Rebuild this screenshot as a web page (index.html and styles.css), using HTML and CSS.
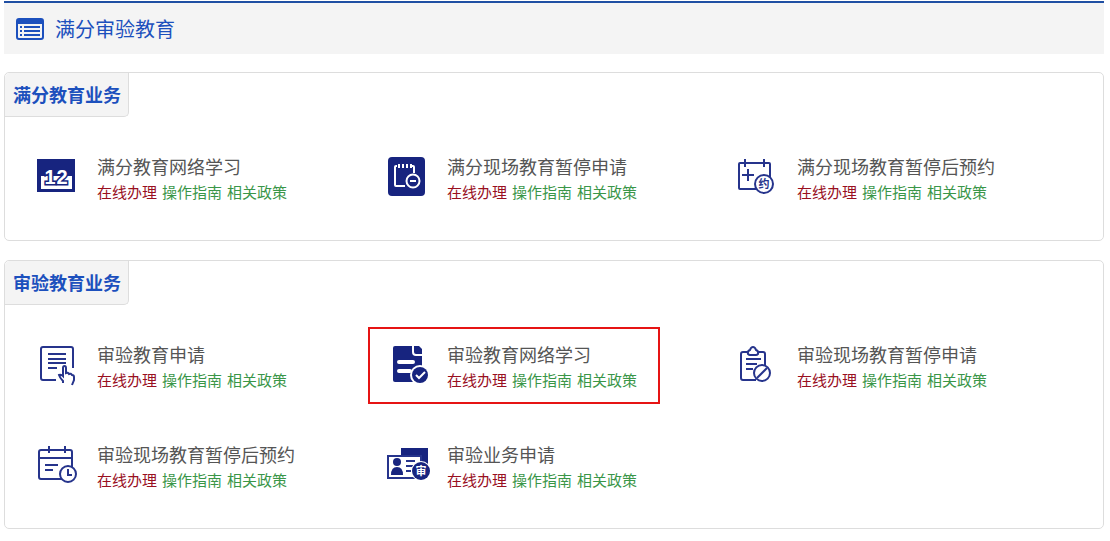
FILE: index.html
```html
<!DOCTYPE html>
<html lang="zh-CN">
<head>
    <meta charset="UTF-8">
    <meta name="viewport" content="width=device-width, initial-scale=1.0">
    <title>满分审验教育</title>
    <link rel="stylesheet" href="styles.css">
</head>
<body>
    <header class="page-header">
        <svg class="header-icon" viewBox="0 0 28 22" aria-hidden="true">
            <rect x="1" y="1" width="26" height="20" rx="2" fill="none" stroke="#1c50bd" stroke-width="2"/>
            <path d="M1 1h26v5H1z" fill="#1c50bd"/>
            <path d="M4 9h2M4 13h2M4 17h2M8 9h16M8 13h16M8 17h16" stroke="#1c50bd" stroke-width="2"/>
        </svg>
        <h1>满分审验教育</h1>
    </header>

    <section class="panel">
        <h2 class="panel-tab">满分教育业务</h2>
        <ul class="service-list">
            <li class="service">
                <svg class="service-icon" viewBox="0 0 48 52" aria-hidden="true">
                    <path class="solid" d="M5 5h38v33H5z"/>
                    <path class="white" d="M9 22h31v13H9z"/>
                    <text class="digits" x="18" y="30">1</text>
                    <text class="digits" x="30" y="30">2</text>
                </svg>
                <div class="service-body">
                    <h3>满分教育网络学习</h3>
                    <p><a class="online" href="#">在线办理</a><a href="#">操作指南</a><a href="#">相关政策</a></p>
                </div>
            </li>
            <li class="service">
                <svg class="service-icon" viewBox="0 0 48 52" aria-hidden="true">
                    <rect class="solid" x="6" y="3" width="37" height="39" rx="4"/>
                    <path class="line-white" d="M15 12h-1q-1 0-1 1v18q0 1 1 1h9M30 12h1q1 0 1 1v6"/>
                    <path class="line-white" d="M17 10v4M21 10v4M25 10v4M29 10v4"/>
                    <circle class="line-white" cx="31" cy="27" r="6.5"/>
                    <path class="line-white" d="M28 27h6"/>
                </svg>
                <div class="service-body">
                    <h3>满分现场教育暂停申请</h3>
                    <p><a class="online" href="#">在线办理</a><a href="#">操作指南</a><a href="#">相关政策</a></p>
                </div>
            </li>
            <li class="service">
                <svg class="service-icon" viewBox="0 0 48 52" aria-hidden="true">
                    <rect class="line" x="7" y="9" width="31" height="26" rx="1"/>
                    <path class="line" d="M13 5v8M32 5v8M16 15v12M10 21h12"/>
                    <circle class="badge" cx="32" cy="30" r="9"/>
                    <text class="badge-text" x="32" y="34">约</text>
                </svg>
                <div class="service-body">
                    <h3>满分现场教育暂停后预约</h3>
                    <p><a class="online" href="#">在线办理</a><a href="#">操作指南</a><a href="#">相关政策</a></p>
                </div>
            </li>
        </ul>
    </section>

    <section class="panel">
        <h2 class="panel-tab">审验教育业务</h2>
        <ul class="service-list">
            <li class="service">
                <svg class="service-icon" viewBox="0 0 48 52" aria-hidden="true">
                    <path class="line" d="M24 38H11q-2 0-2-2V7q0-2 2-2h28q2 0 2 2v19"/>
                    <path class="line" d="M16 12h18M16 17h18M16 21h18M16 26h9"/>
                    <path class="line" d="M31 41v-2q-3-3-4-6 2-1 4 1v-8q0-2 1.500-2t1.500 2v5q2-1 3 1 2-1 3 1 2 0 2 2v3l-2 5"/>
                </svg>
                <div class="service-body">
                    <h3>审验教育申请</h3>
                    <p><a class="online" href="#">在线办理</a><a href="#">操作指南</a><a href="#">相关政策</a></p>
                </div>
            </li>
            <li class="service service-marked">
                <svg class="service-icon" viewBox="0 0 48 52" aria-hidden="true">
                    <path class="solid" d="M13 4h26q1 0 1 1v35H13q-2 0-2-2V6q0-2 2-2z"/>
                    <path class="line-white" d="M31 3v7q0 3 3 3h7"/>
                    <path class="white" d="M36 3h5v5z"/>
                    <path class="line-white thick" d="M17 20h14M17 29h11"/>
                    <circle class="white" cx="38" cy="33" r="10"/>
                    <circle class="solid" cx="38" cy="33" r="8"/>
                    <path class="line-white" d="M34 33l3 3 6-6"/>
                </svg>
                <div class="service-body">
                    <h3>审验教育网络学习</h3>
                    <p><a class="online" href="#">在线办理</a><a href="#">操作指南</a><a href="#">相关政策</a></p>
                </div>
            </li>
            <li class="service">
                <svg class="service-icon" viewBox="0 0 48 52" aria-hidden="true">
                    <path class="line" d="M15 10h-4q-2 0-2 2v24q0 2 2 2h13M27 10h4q2 0 2 2v11"/>
                    <path class="line" d="M16 12q-1-3 2-4 1-3 3-3t3 3q3 1 2 4-1 1-2 1h-6q-1 0-2-1z"/>
                    <path class="line" d="M14 17h15M14 22h11M14 27h7"/>
                    <circle class="badge" cx="30" cy="31" r="8"/>
                    <path class="line" d="M25 36l10-10"/>
                </svg>
                <div class="service-body">
                    <h3>审验现场教育暂停申请</h3>
                    <p><a class="online" href="#">在线办理</a><a href="#">操作指南</a><a href="#">相关政策</a></p>
                </div>
            </li>
            <li class="service">
                <svg class="service-icon" viewBox="0 0 48 52" aria-hidden="true">
                    <rect class="line" x="7" y="8" width="33" height="29" rx="2"/>
                    <path class="line" d="M17 4v7M33 4v7M7 16h33M13 23h13M13 28h8"/>
                    <circle class="badge" cx="36" cy="32" r="8"/>
                    <path class="line" d="M36 27v6h4"/>
                </svg>
                <div class="service-body">
                    <h3>审验现场教育暂停后预约</h3>
                    <p><a class="online" href="#">在线办理</a><a href="#">操作指南</a><a href="#">相关政策</a></p>
                </div>
            </li>
            <li class="service">
                <svg class="service-icon" viewBox="0 0 48 52" aria-hidden="true">
                    <path class="solid" d="M19 6h27v24H19z"/>
                    <rect class="badge" x="6" y="14" width="33" height="22"/>
                    <circle class="solid" cx="15" cy="20" r="4"/>
                    <path class="solid" d="M9 33q0-8 6-8t6 8z"/>
                    <path class="line" d="M24 19h9M24 24h7M24 29h5"/>
                    <circle class="white" cx="39" cy="29" r="10"/>
                    <circle class="solid" cx="39" cy="29" r="9"/>
                    <text class="badge-text badge-text-white" x="39" y="33">审</text>
                </svg>
                <div class="service-body">
                    <h3>审验业务申请</h3>
                    <p><a class="online" href="#">在线办理</a><a href="#">操作指南</a><a href="#">相关政策</a></p>
                </div>
            </li>
        </ul>
    </section>
</body>
</html>
```
FILE: styles.css
```css
/* Global styles */
*, *::after {
    box-sizing: border-box;
}

body {
    font-family: "Noto Sans CJK SC", sans-serif;
    margin: 1px 6px 0 4px;
    background-color: #fff;
    color: #555;
}

h1, h2, h3, p, ul {
    margin: 0;
    padding: 0;
}

/* Page header */
.page-header {
    display: flex;
    align-items: center;
    gap: 11px;
    height: 53px;
    padding-left: 12px;
    border-top: 2px solid #1f4fa3;
    background-color: #f4f4f4;
}

.header-icon {
    width: 28px;
    height: 22px;
}

.page-header h1 {
    font-size: 20px;
    font-weight: 400;
    color: #1c50bd;
}

/* Bordered group of services */
.panel {
    margin-top: 18px;
    border: 1px solid #ddd;
    border-radius: 5px;
}

.panel + .panel {
    margin-top: 19px;
}

.panel-tab {
    width: fit-content;
    padding: 0 7px 0 8px;
    border-right: 1px solid #ddd;
    border-bottom: 1px solid #ddd;
    border-radius: 5px 0 5px 0;
    background-color: #f4f4f4;
    font-size: 18px;
    line-height: 43px;
    color: #1c50bd;
}

.service-list {
    display: grid;
    grid-template-columns: repeat(3, 1fr);
    row-gap: 48px;
    padding: 37px 40px 34px 8px;
    list-style: none;
}

.service {
    display: flex;
    gap: 17px;
    padding-left: 19px;
    position: relative;
}

.service-body {
    margin-top: -1px;
}

.service h3 {
    font-size: 18px;
    font-weight: 400;
    line-height: 26px;
}

.service p {
    display: flex;
    gap: 5px;
    font-size: 15px;
    line-height: 26px;
    white-space: nowrap;
}

.service a {
    color: #3a9648;
    text-decoration: none;
}

.service a:hover {
    text-decoration: underline;
}

.service .online {
    color: #99101f;
}

/* Red frame around the marked service */
.service-marked::after {
    content: "";
    position: absolute;
    top: -15px;
    left: 5px;
    width: 292px;
    height: 77px;
    border: 2px solid #e61414;
    pointer-events: none;
}

/* Icons */
.service-icon {
    flex: none;
    width: 48px;
    height: 52px;
}

.solid {
    fill: #17247f;
}

.white {
    fill: #fff;
}

.line {
    fill: none;
    stroke: #26348c;
    stroke-width: 2;
}

.line-white {
    fill: none;
    stroke: #fff;
    stroke-width: 2;
}

.thick {
    stroke-width: 4;
    stroke-linecap: round;
}

.badge {
    fill: #fff;
    stroke: #26348c;
    stroke-width: 2;
}

.digits {
    fill: #fff;
    stroke: #17247f;
    stroke-width: 3px;
    paint-order: stroke;
    font-family: "Liberation Sans", sans-serif;
    font-size: 20px;
    font-weight: bold;
    text-anchor: middle;
}

.badge-text {
    fill: #26348c;
    font-size: 11px;
    font-weight: bold;
    text-anchor: middle;
}

.badge-text-white {
    fill: #fff;
}
```
